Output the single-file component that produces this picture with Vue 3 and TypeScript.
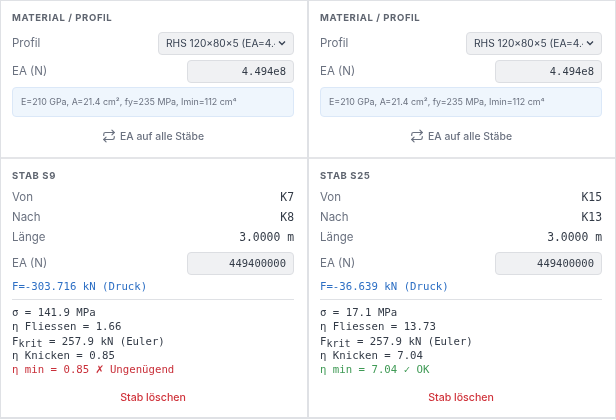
<script setup lang="ts">
interface Stab {
  name: string
  von: string
  nach: string
  force: string
  sigma: string
  fliessen: string
  knicken: string
  min: string
  ok: boolean
}

const stabs: Stab[] = [
  { name: 'S9', von: 'K7', nach: 'K8', force: '-303.716', sigma: '141.9', fliessen: '1.66', knicken: '0.85', min: '0.85', ok: false },
  { name: 'S25', von: 'K15', nach: 'K13', force: '-36.639', sigma: '17.1', fliessen: '13.73', knicken: '7.04', min: '7.04', ok: true },
]
</script>

<template>
  <div class="page">
    <div v-for="s in stabs" :key="s.name" class="col">
      <section class="panel top">
        <h3>MATERIAL / PROFIL</h3>
        <div class="row field">
          <span class="label">Profil</span>
          <select class="select">
            <option>RHS 120×80×5 (EA=4.494e8)</option>
          </select>
        </div>
        <div class="row field">
          <span class="label">EA (N)</span>
          <div class="input wide">4.494e8</div>
        </div>
        <div class="info">E=210 GPa, A=21.4 cm², fy=235 MPa, Imin=112 cm⁴</div>
        <div class="apply">
          <svg viewBox="0 0 24 24" width="14" height="14" fill="none" stroke="#6b7280" stroke-width="2" stroke-linecap="round" stroke-linejoin="round">
            <path d="M17 2l4 4-4 4" /><path d="M3 11V9a3 3 0 0 1 3-3h15" />
            <path d="M7 22l-4-4 4-4" /><path d="M21 13v2a3 3 0 0 1-3 3H3" />
          </svg>
          <span>EA auf alle Stäbe</span>
        </div>
      </section>

      <section class="panel bottom">
        <h3>STAB {{ s.name }}</h3>
        <div class="row line"><span class="label">Von</span><span class="val">{{ s.von }}</span></div>
        <div class="row line"><span class="label">Nach</span><span class="val">{{ s.nach }}</span></div>
        <div class="row line"><span class="label">Länge</span><span class="val">3.0000 m</span></div>
        <div class="row field ea"><span class="label">EA (N)</span><div class="input wide">449400000</div></div>
        <div class="force">F={{ s.force }} kN (Druck)</div>
        <div class="results">
          <div>σ = {{ s.sigma }} MPa</div>
          <div>η Fliessen = {{ s.fliessen }}</div>
          <div>F<sub>krit</sub> = 257.9 kN (Euler)</div>
          <div>η Knicken = {{ s.knicken }}</div>
          <div v-if="s.ok" class="verdict good">η min = {{ s.min }} ✓ OK</div>
          <div v-else class="verdict bad">η min = {{ s.min }} <b>✗</b> Ungenügend</div>
        </div>
        <div class="delete">Stab löschen</div>
      </section>
    </div>
  </div>
</template>

<style>
html, body {
  margin: 0;
  background: #fff;
}
</style>

<style scoped>
.page {
  display: grid;
  grid-template-columns: 308px 308px;
  width: 616px;
  height: 420px;
  overflow: hidden;
  box-sizing: border-box;
  font-family: Inter, "Liberation Sans", sans-serif;
  filter: blur(0.4px);
}
.col {
  display: flex;
  flex-direction: column;
  box-sizing: border-box;
  height: 419px;
  border: 1px solid #dfe1e5;
  border-bottom-width: 2px;
}
.panel {
  padding: 0 13px 0 11px;
}
.top {
  height: 158px;
  box-sizing: border-box;
  padding-top: 11px;
  border-bottom: 2px solid #e4e5e8;
}
.bottom {
  flex: 1;
  padding-top: 11px;
}
h3 {
  margin: 0;
  font-size: 9.5px;
  line-height: 12px;
  font-weight: 700;
  letter-spacing: 0.6px;
  color: #5f6570;
}
.row {
  display: flex;
  justify-content: space-between;
  align-items: center;
}
.label {
  font-size: 11.5px;
  color: #6b7280;
}
.field {
  height: 24px;
}
.top h3 + .field {
  margin-top: 7px;
}
.top .field + .field {
  margin-top: 4px;
}
.select {
  appearance: none;
  width: 136px;
  height: 23px;
  box-sizing: border-box;
  padding: 0 18px 0 7px;
  border: 1px solid #dcdee2;
  border-radius: 4px;
  background: #f0f1f3 url("data:image/svg+xml,%3Csvg xmlns='http://www.w3.org/2000/svg' width='10' height='10'%3E%3Cpath d='M2 3.5 5 6.5 8 3.5' fill='none' stroke='%23374151' stroke-width='1.3'/%3E%3C/svg%3E") no-repeat right 6px center;
  font-family: inherit;
  font-size: 10.2px;
  color: #374151;
}
.input {
  height: 23px;
  box-sizing: border-box;
  padding: 0 7px;
  border: 1px solid #dcdee2;
  border-radius: 4px;
  background: #f0f1f3;
  font-family: "DejaVu Sans Mono", monospace;
  font-size: 10.5px;
  line-height: 21px;
  text-align: right;
  color: #333b47;
}
.wide {
  width: 107px;
}
.info {
  margin-top: 4px;
  height: 30px;
  box-sizing: border-box;
  padding: 0 8px;
  border: 1px solid #dbe8f8;
  border-radius: 4px;
  background: #eff6fd;
  font-size: 8.9px;
  line-height: 28px;
  color: #6b7280;
  white-space: nowrap;
}
.apply {
  display: flex;
  align-items: center;
  justify-content: center;
  gap: 4px;
  margin-top: 12px;
  font-size: 10.4px;
  font-weight: 500;
  color: #6b7280;
}
.line {
  height: 20px;
}
.bottom h3 + .line {
  margin-top: 5px;
}
.val {
  font-family: "DejaVu Sans Mono", monospace;
  font-size: 11.4px;
  color: #333b47;
}
.ea {
  margin-top: 4px;
}
.force {
  margin-top: 5px;
  font-family: "DejaVu Sans Mono", monospace;
  font-size: 10.7px;
  line-height: 14px;
  color: #2d6fc4;
}
.results {
  margin-top: 5px;
  padding-top: 6px;
  border-top: 1px solid #dfe1e5;
  font-family: "DejaVu Sans Mono", monospace;
  font-size: 10.7px;
  line-height: 14.3px;
  color: #333b47;
}
.results sub {
  font-size: 10px;
  line-height: 0;
  vertical-align: -2px;
}
.results b {
  font-size: 13px;
  line-height: 0;
}
.verdict.bad {
  color: #c9303a;
}
.verdict.good {
  color: #3f9a55;
}
.delete {
  margin-top: 14px;
  text-align: center;
  font-size: 10.6px;
  font-weight: 500;
  color: #d0343c;
}
</style>
